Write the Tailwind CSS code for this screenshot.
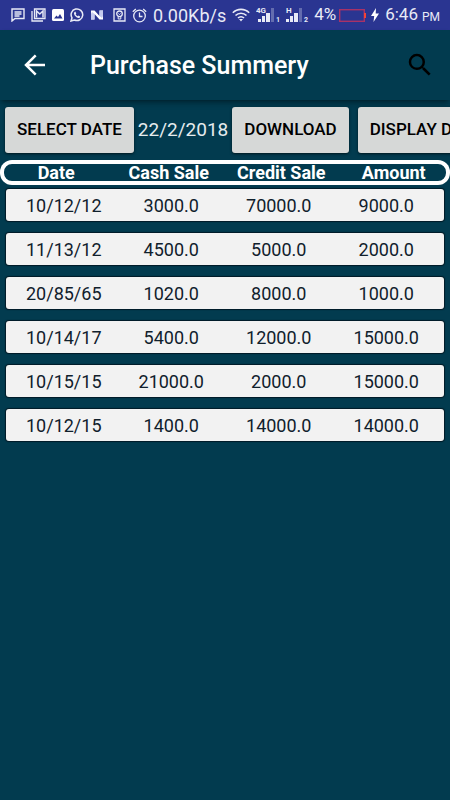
<!DOCTYPE html>
<html lang="en">
<head>
  <meta charset="UTF-8" />
  <meta name="viewport" content="width=device-width, initial-scale=1.0"/>
  <title>Purchase Summery</title>
  <script src="https://cdn.jsdelivr.net/npm/@tailwindcss/browser@4"></script>
</head>
<body class="bg-[#023b4f] font-['Roboto',sans-serif] min-h-screen overflow-x-hidden">

  <!-- Status bar -->
  <div class="bg-[#2a3591] text-[#e8eaf6] h-[30px] pl-[11px] pr-[10px] flex items-center justify-between whitespace-nowrap">
    <div class="flex items-center gap-[6px]">
      <svg class="w-[14px] h-[14px]" viewBox="0 0 14 14" fill="none" stroke="currentColor" stroke-width="1.4"><path d="M1 1h12v9.500H4L1 13zM3.500 4h7M3.500 6h7M3.500 8h5"/></svg>
      <svg class="w-[15px] h-[14px]" viewBox="0 0 15 14" fill="none" stroke="currentColor" stroke-width="1.300"><path d="M1 3v10h11M3.500 1h10.500v9.500H3.500z"/><path d="M5.500 9.500V3l3.300 3 3.200-3v6.500" stroke-width="1.500"/></svg>
      <svg class="w-[12px] h-[12px]" viewBox="0 0 12 12"><rect width="12" height="12" rx="1.500" fill="#fff"/><path d="M2 9.500l2.500-3 1.500 1.500 2-3 2.500 4.500z" fill="#2a3591"/></svg>
      <svg class="w-[14px] h-[14px]" viewBox="0 0 14 14"><path d="M1 13l1-3.200A5.800 5.800 0 1 1 4.500 12z" fill="none" stroke="currentColor" stroke-width="1.500"/><path d="M4.300 4.200l1-.6 1 1.800-.6.800c.5 1 1 1.500 2 2l.9-.7 1.600 1-.5 1.200c-1 .8-2.500.3-4-1.100S3.500 5.300 4.300 4.200z" fill="currentColor"/></svg>
      <svg class="w-[14px] h-[12px]" viewBox="0 0 14 12"><path d="M1 1.500h3.500L9.500 7V1.500H13v9H9.500L4.500 5v5.500H1z" fill="#fff"/><path d="M9.500 1.500H13V7l-1 2-2.500-2zM1 5l1-2 2.500 2v5.500H1z" fill="#c5caee"/></svg>
      <svg class="w-[13px] h-[14px] ml-[3px]" viewBox="0 0 13 14" fill="none" stroke="currentColor"><path d="M1 1h11v12H1z" stroke-width="1.300"/><circle cx="6.500" cy="5.800" r="2.800" stroke-width="1.300"/><path d="M5.200 8.500v2.500h2.600V8.500M5.500 5.500l1 1 1-1"/></svg>
      <svg class="w-[15px] h-[15px]" viewBox="0 0 15 15" fill="none" stroke="currentColor" stroke-width="1.300"><circle cx="7.500" cy="8" r="5.800"/><path d="M7.500 4.500V8.500h3M.8 3.800L3.800 1M14.200 3.800L11.200 1"/></svg>
      <span class="text-[18px]">0.00Kb/s</span>
    </div>

    <div class="flex items-center">
      <svg class="w-[18px] h-[14px] mr-[6px]" viewBox="0 0 18 14" fill="none" stroke="currentColor" stroke-width="1.600"><path d="M.8 4.800a11.600 11.600 0 0 1 16.400 0M3.500 7.500a7.800 7.800 0 0 1 11 0M6 10a4.200 4.200 0 0 1 6 0"/><path d="M7 11h4l-2 2.500z" fill="currentColor" stroke="none"/></svg>
      <svg class="w-[24px] h-[16px] mr-[6px]" viewBox="0 0 24 16" fill="currentColor"><path d="M2 12h3v3H2zM6 9h3v6H6zM10 6h4v9h-4z"/><path d="M15 1h3v14h-3z" opacity=".3"/><text x="0" y="6" font-size="8" font-weight="700">4G</text><text x="20" y="15" font-size="7" font-weight="700">1</text></svg>
      <svg class="w-[24px] h-[16px] mr-[4px]" viewBox="0 0 24 16" fill="currentColor"><path d="M0 12h3v3H0zM4 9h3v6H4zM8 6h4v9H8z"/><path d="M13 1h3v14h-3z" opacity=".3"/><text x="0" y="6" font-size="8" font-weight="700">H</text><text x="18" y="15" font-size="7" font-weight="700">2</text></svg>
      <span class="text-[17px] mr-[3px]">4%</span>
      <svg class="w-[28px] h-[13px] mr-[4px]" viewBox="0 0 28 13"><rect x=".7" y=".7" width="24.600" height="11.600" fill="none" stroke="#a83267" stroke-width="1.400"/><path d="M25 4h2v5h-2z" fill="#f44336"/></svg>
      <svg class="w-[8px] h-[14px] mr-[6px]" viewBox="0 0 8 14"><path d="M5 0L0 8h3.200L2.500 14 8 5.500H4.700z" fill="#fff"/></svg>
      <span class="text-[17px]">6:46</span>
      <span class="text-[12px] ml-[4px] mt-[3px]">PM</span>
    </div>
  </div>

  <!-- App bar -->
  <header class="h-[70px] px-[18px] flex items-center shadow-md shadow-black/30">
    <button aria-label="Back" class="mr-[38px]">
      <svg class="w-[34px] h-[34px]" viewBox="0 0 34 34" fill="none" stroke="#fff" stroke-width="2.500"><path d="M27 17H8.500M17.700 7.300L8 17l9.700 9.700"/></svg>
    </button>
    <h1 class="text-white text-[25px] font-medium flex-1 pt-[2px]">Purchase Summery</h1>
    <button aria-label="Search" class="-mr-[3px]">
      <svg class="w-[30px] h-[30px]" viewBox="0 0 24 24"><path d="M15.500 14h-.79l-.28-.27A6.471 6.471 0 0 0 16 9.500 6.500 6.500 0 1 0 9.500 16c1.610 0 3.090-.59 4.230-1.570l.27.28v.79l5 4.990L20.490 19l-4.990-5zm-6 0C7.010 14 5 11.990 5 9.500S7.010 5 9.500 5 14 7.010 14 9.500 11.990 14 9.500 14z"/></svg>
    </button>
  </header>

  <!-- Actions, run off the right edge -->
  <div class="flex items-center h-[60px] pl-[5px] overflow-hidden whitespace-nowrap">
    <button class="shrink-0 bg-[#d6d8d7] text-black h-[46px] px-3 rounded-[3px] text-[17px] font-medium shadow-sm shadow-black/50">SELECT DATE</button>
    <span class="shrink-0 text-[#e6ecee] text-[19px] mx-1">22/2/2018</span>
    <button class="shrink-0 bg-[#d6d8d7] text-black h-[46px] px-3 rounded-[3px] text-[17px] font-medium shadow-sm shadow-black/50">DOWNLOAD</button>
    <button class="shrink-0 bg-[#d6d8d7] text-black h-[46px] px-3 rounded-[3px] text-[17px] font-medium shadow-sm shadow-black/50 ml-[9px]">DISPLAY DATA</button>
  </div>

  <!-- Purchases -->
  <table class="block w-full text-center">
    <thead class="block">
      <tr class="grid grid-cols-4 h-[25px] inset-ring-4 inset-ring-white rounded-[12px] text-white text-[18px] leading-[26px]">
        <th>Date</th>
        <th>Cash Sale</th>
        <th>Credit Sale</th>
        <th>Amount</th>
      </tr>
    </thead>
    <tbody class="flex flex-col gap-[12px] px-[6px] pt-[4px] text-[18px] leading-[34px] text-[#10202c]">
      <tr class="grid grid-cols-4 h-[32px] px-1 bg-[#f2f2f2] rounded-[3px] shadow-[0_0_1px_1px_#001a26]">
        <td>10/12/12</td><td>3000.0</td><td>70000.0</td><td>9000.0</td>
      </tr>
      <tr class="grid grid-cols-4 h-[32px] px-1 bg-[#f2f2f2] rounded-[3px] shadow-[0_0_1px_1px_#001a26]">
        <td>11/13/12</td><td>4500.0</td><td>5000.0</td><td>2000.0</td>
      </tr>
      <tr class="grid grid-cols-4 h-[32px] px-1 bg-[#f2f2f2] rounded-[3px] shadow-[0_0_1px_1px_#001a26]">
        <td>20/85/65</td><td>1020.0</td><td>8000.0</td><td>1000.0</td>
      </tr>
      <tr class="grid grid-cols-4 h-[32px] px-1 bg-[#f2f2f2] rounded-[3px] shadow-[0_0_1px_1px_#001a26]">
        <td>10/14/17</td><td>5400.0</td><td>12000.0</td><td>15000.0</td>
      </tr>
      <tr class="grid grid-cols-4 h-[32px] px-1 bg-[#f2f2f2] rounded-[3px] shadow-[0_0_1px_1px_#001a26]">
        <td>10/15/15</td><td>21000.0</td><td>2000.0</td><td>15000.0</td>
      </tr>
      <tr class="grid grid-cols-4 h-[32px] px-1 bg-[#f2f2f2] rounded-[3px] shadow-[0_0_1px_1px_#001a26]">
        <td>10/12/15</td><td>1400.0</td><td>14000.0</td><td>14000.0</td>
      </tr>
    </tbody>
  </table>

</body>
</html>
